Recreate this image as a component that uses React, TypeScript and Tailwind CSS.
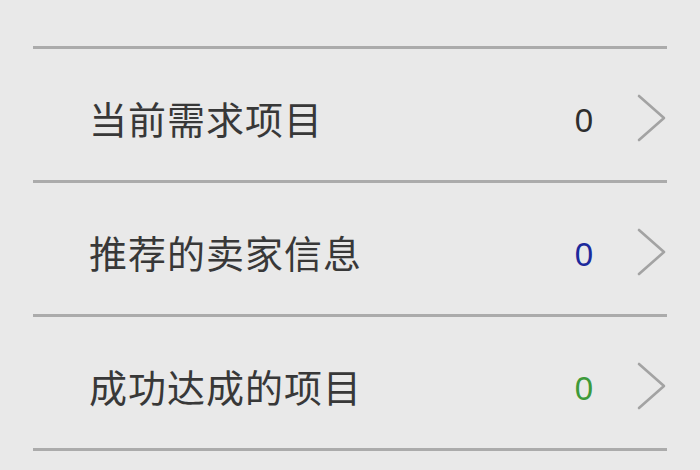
const ROWS = [
  { label: "当前需求项目", count: 0, color: "text-[#2e2e2e]" },
  { label: "推荐的卖家信息", count: 0, color: "text-[#1c2a9c]" },
  { label: "成功达成的项目", count: 0, color: "text-[#3d9a3a]" },
];

function Chevron() {
  return (
    <svg width="30" height="48" viewBox="0 0 30 48" fill="none" className="shrink-0">
      <path d="M2 2 L27 24 L2 46" stroke="#a3a3a3" strokeWidth="2.6" strokeLinecap="round" strokeLinejoin="round" />
    </svg>
  );
}

export default function App() {
  return (
    <div
      className="w-[700px] h-[470px] overflow-hidden bg-[#e9e9e9] pt-[46px] px-[33px]"
      style={{ fontFamily: '"Noto Sans CJK SC", "Noto Sans", sans-serif' }}
    >
      <div className="h-[3px] bg-[#ababab]" />
      {ROWS.map((row) => (
        <div key={row.label}>
          <div className="h-[131px] flex items-center pl-[56px] pt-[6px]">
            <span className="flex-1 text-[38px] leading-none tracking-[1px] text-[#383838]">{row.label}</span>
            <span
              className={`text-[33px] leading-none mr-[44px] mt-[6px] ${row.color}`}
              style={{ fontFamily: '"Liberation Sans", Arial, sans-serif' }}
            >
              {row.count}
            </span>
            <Chevron />
          </div>
          <div className="h-[3px] bg-[#ababab]" />
        </div>
      ))}
    </div>
  );
}
